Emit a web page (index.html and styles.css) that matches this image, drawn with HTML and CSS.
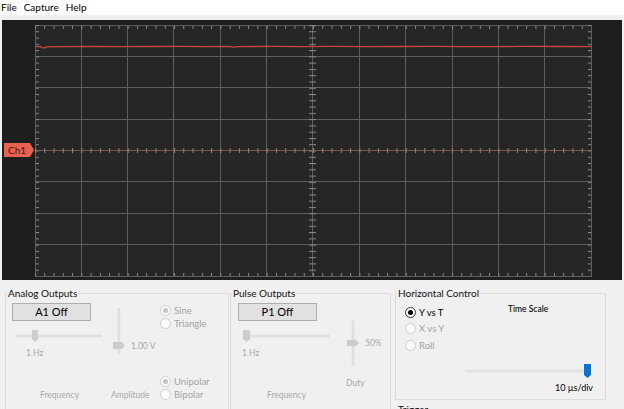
FILE: index.html
```html
<!DOCTYPE html>
<html>
<head>
<meta charset="utf-8">
<link rel="stylesheet" href="styles.css">
</head>
<body>
<div class="menubar"><span>File</span><span>Capture</span><span>Help</span></div>
<div class="scope">
<svg width="620" height="260" viewBox="0 0 620 260">
  <defs>
    <pattern id="ht" x="33" y="0" width="9.2667" height="10" patternUnits="userSpaceOnUse">
      <rect x="0" y="0" width="1" height="10" fill="#8a8a8a"/>
    </pattern>
    <pattern id="vt" x="0" y="5" width="10" height="6.275" patternUnits="userSpaceOnUse">
      <rect x="0" y="0" width="10" height="1" fill="#8a8a8a"/>
    </pattern>
  </defs>
  <rect x="33" y="5" width="556" height="251" fill="#262626"/>
  <g stroke="#5e5e5e" stroke-width="1" fill="none">
    <path d="M79.5 5V256M125.5 5V256M171.5 5V256M218.5 5V256M264.5 5V256M310.5 5V256M357.5 5V256M403.5 5V256M450.5 5V256M496.5 5V256M542.5 5V256"/>
    <path d="M33 36.5H589M33 67.5H589M33 99.5H589M33 130.5H589M33 161.5H589M33 193.5H589M33 224.5H589"/>
    <rect x="33.5" y="5.5" width="556" height="251"/>
  </g>
  <rect x="33" y="6" width="556" height="3" fill="url(#ht)"/>
  <rect x="33" y="253" width="556" height="3" fill="url(#ht)"/>
  <rect x="33" y="128" width="556" height="5" fill="url(#ht)"/>
  <rect x="34" y="5" width="3" height="251" fill="url(#vt)"/>
  <rect x="586" y="5" width="3" height="251" fill="url(#vt)"/>
  <rect x="307" y="5" width="7" height="251" fill="url(#vt)"/>
  <line x1="37" y1="130.5" x2="589" y2="130.5" stroke="#b5473d" stroke-width="1" stroke-dasharray="3 4" opacity="0.85"/>
  <path d="M34 26.6 L38 26.4 L40 27.6 L42 28 L44 26.8 L60 26.6 L90 26.3 L120 26.7 L150 26.5 L180 26.4 L200 26.6 L228 26.5 L231 27.4 L234 26.6 L270 26.4 L300 26.7 L330 26.4 L360 26.6 L400 26.5 L430 26.3 L460 26.6 L490 26.7 L520 26.4 L560 26.5 L589 26.6" stroke="#c9483b" stroke-width="1.3" fill="none"/>
  <polygon points="2,123 28,123 32,130 28,137 2,137" fill="#ea624f"/>
  <text x="6" y="133.5" class="ch">Ch1</text>
</svg>
</div>
<div class="panels">
  <fieldset class="group analog">
    <legend>Analog Outputs</legend>
    <div class="gbody">
      <div class="col a-freq">
        <div class="btn">A1 Off</div>
        <svg class="hs" width="92" height="12" viewBox="0 0 92 12">
          <rect x="4" y="5" width="86" height="2" fill="#e2e2e2" stroke="#d6d6d6" stroke-width="0.5"/>
          <polygon points="20,0 26,0 26,9 23,12 20,9" fill="#cccccc"/>
        </svg>
        <div class="val hz">1 Hz</div>
        <div class="cap a-fcap">Frequency</div>
      </div>
      <div class="col a-amp">
        <div class="vrow">
          <svg class="vs" width="14" height="46" viewBox="0 0 14 46">
            <rect x="6" y="0" width="2" height="46" fill="#e2e2e2" stroke="#d6d6d6" stroke-width="0.5"/>
            <polygon points="1,34 10,34 13,37.5 10,41 1,41" fill="#cccccc"/>
          </svg>
          <div class="val volt">1.00 V</div>
        </div>
        <div class="cap a-acap">Amplitude</div>
      </div>
      <div class="col a-radios">
        <div class="radio dis on"><span class="dot"></span>Sine</div>
        <div class="radio dis"><span class="dot"></span>Triangle</div>
        <div class="radio dis on gap"><span class="dot"></span>Unipolar</div>
        <div class="radio dis"><span class="dot"></span>Bipolar</div>
      </div>
    </div>
  </fieldset>
  <fieldset class="group pulse">
    <legend>Pulse Outputs</legend>
    <div class="gbody">
      <div class="col p-freq">
        <div class="btn">P1 Off</div>
        <svg class="hs" width="92" height="12" viewBox="0 0 92 12">
          <rect x="4" y="5" width="86" height="2" fill="#e2e2e2" stroke="#d6d6d6" stroke-width="0.5"/>
          <polygon points="4,0 11,0 11,9 7.5,12 4,9" fill="#cccccc"/>
        </svg>
        <div class="val p-hz">1 Hz</div>
        <div class="cap p-fcap">Frequency</div>
      </div>
      <div class="col p-duty">
        <div class="vrow p-vrow">
          <svg class="vs" width="12" height="46" viewBox="0 0 12 46">
            <rect x="5" y="0" width="2" height="46" fill="#e2e2e2" stroke="#d6d6d6" stroke-width="0.5"/>
            <polygon points="0,20 9,20 12,23 9,26 0,26" fill="#cccccc"/>
          </svg>
          <div class="val pct">50%</div>
        </div>
        <div class="cap p-dcap">Duty</div>
      </div>
    </div>
  </fieldset>
  <div class="rightcol">
    <fieldset class="group horiz">
      <legend>Horizontal Control</legend>
      <div class="gbody">
        <div class="col h-radios">
          <div class="radio en on"><span class="dot"></span>Y vs T</div>
          <div class="radio dis"><span class="dot"></span>X vs Y</div>
          <div class="radio dis"><span class="dot"></span>Roll</div>
        </div>
        <div class="col h-scale">
          <div class="ts">Time Scale</div>
          <svg class="hs2" width="130" height="14" viewBox="0 0 130 14">
            <rect x="2" y="6" width="124" height="2" fill="#e6e6e6" stroke="#d8d8d8" stroke-width="0.5"/>
            <polygon points="120,0 127,0 127,11 123.5,14 120,11" fill="#0a74d6"/>
          </svg>
          <div class="tval">10 µs/div</div>
        </div>
      </div>
    </fieldset>
    <fieldset class="group trig">
      <legend>Trigger</legend>
    </fieldset>
  </div>
</div>
</body>
</html>
```
FILE: styles.css
```css
* { box-sizing: border-box; }
body {
  margin: 0;
  width: 624px;
  height: 409px;
  overflow: hidden;
  background: #f0f0f0;
  font-family: Lato, "Noto Sans", sans-serif;
  color: #000;
}
.menubar {
  height: 15px;
  background: #fff;
  display: flex;
  gap: 7px;
  font-size: 10px;
  line-height: 15px;
  padding-left: 1px;
}
.scope {
  margin: 5px 2px 0 2px;
  height: 260px;
  background: #1e1e1e;
}
.scope svg { display: block; }
.ch { font-family: Lato, "Noto Sans", sans-serif; font-size: 10px; fill: #3a1c16; }

.panels {
  display: flex;
  align-items: flex-start;
  padding-left: 5px;
  margin-top: 6px;
}
.group {
  border: 1px solid #dcdcdc;
  margin: 0;
  padding: 0;
  min-width: 0;
}
.group legend {
  font-size: 10px;
  line-height: 14px;
  padding: 0 1px;
  margin-left: 1px;
  color: #111;
}
.analog { width: 224px; height: 140px; }
.pulse { width: 161px; height: 140px; margin-left: 1px; }
.rightcol { display: flex; flex-direction: column; width: 211px; margin-left: 4px; }
.horiz { height: 114px; }
.trig { height: 30px; margin-top: 2px; }

.gbody { display: flex; align-items: flex-start; }
.analog .gbody { padding: 3px 0 0 6px; }
.pulse .gbody { padding: 3px 0 0 7px; }
.col { display: flex; flex-direction: column; align-items: flex-start; }

.btn {
  width: 79px;
  height: 18px;
  background: #e1e1e1;
  border: 1px solid #adadad;
  font-size: 11px;
  line-height: 16px;
  text-align: center;
}
.hs, .vs, .hs2 { display: block; }
.hs { margin-top: 9px; }
.a-freq .hs { margin-left: 0; }
.p-freq .hs { margin-left: 1px; }

.val, .cap { font-size: 8.5px; line-height: 12px; color: #a8a8a8; white-space: nowrap; }
.hz { margin-top: 5px; margin-left: 14px; }
.a-fcap { margin-top: 30px; margin-left: 28px; }
.a-freq { width: 92px; }
.a-amp { width: 49px; margin-left: 7px; }
.vrow { display: flex; align-items: flex-end; margin-top: 5px; }
.vs { margin-left: 1px; }
.volt { margin-left: 5px; margin-bottom: 2px; }
.a-acap { margin-top: 35px; }
.a-radios { margin-left: 0; margin-top: 1px; }

.radio {
  display: flex;
  align-items: center;
  height: 13px;
  font-size: 9.5px;
  white-space: nowrap;
}
.radio .dot {
  width: 11px;
  height: 11px;
  border-radius: 50%;
  border: 1px solid #cfcfcf;
  background: #fbfbfb;
  margin-right: 3px;
  display: flex;
  align-items: center;
  justify-content: center;
  flex: none;
}
.radio.on .dot::after {
  content: "";
  width: 5px;
  height: 5px;
  border-radius: 50%;
  background: #c4c4c4;
}
.radio.dis { color: #a3a3a3; }
.radio.en { color: #000; }
.radio.en .dot { border-color: #333; background: #fff; }
.radio.en.on .dot::after { background: #000; }
.radio.gap { margin-top: 45px; }

.p-freq { width: 93px; }
.p-hz { margin-top: 5px; margin-left: 4px; }
.p-fcap { margin-top: 30px; margin-left: 29px; }
.p-duty { margin-left: 15px; }
.p-vrow { align-items: flex-start; margin-top: 17px; }
.pct { margin-left: 6px; margin-top: 17px; }
.p-dcap { margin-top: 11px; margin-left: 0; }

.horiz .gbody { padding: 3px 0 0 9px; }
.h-radios { width: 61px; margin-top: 1px; }
.h-radios .radio { height: 16.5px; }
.h-scale { width: 130px; margin-left: -2px; }
.ts { font-size: 8.5px; line-height: 12px; margin-top: 0; margin-left: 44px; font-weight: 500; }
.hs2 { margin-top: 49px; }
.tval { font-size: 9px; line-height: 12px; margin-top: 4px; align-self: flex-end; margin-right: 1px; }
```
